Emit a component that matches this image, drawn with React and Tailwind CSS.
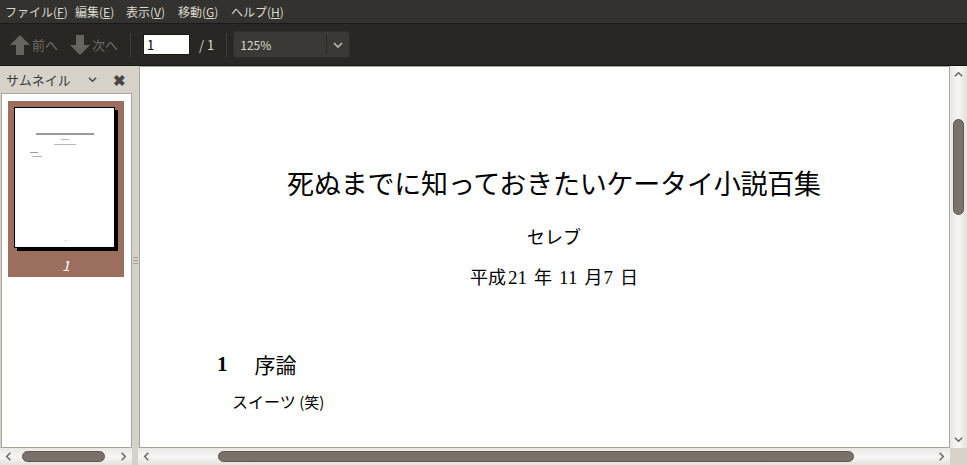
import React from "react";

const ui = { fontFamily: '"Noto Sans CJK JP", "Noto Sans", sans-serif' };
const doc = { fontFamily: '"Noto Sans CJK JP", "DejaVu Sans", sans-serif' };
const serif = { fontFamily: '"Liberation Serif", "Noto Sans CJK JP", serif' };

function Chevron({ dir = "down", className = "" }) {
  const paths = {
    down: "M2 4 L6 8 L10 4",
    up: "M2 8 L6 4 L10 8",
    left: "M8 2 L4 6 L8 10",
    right: "M4 2 L8 6 L4 10",
  };
  return (
    <svg viewBox="0 0 12 12" className={className} fill="none" stroke="currentColor" strokeWidth="1.6">
      <path d={paths[dir]} />
    </svg>
  );
}

function BlockArrow({ up }) {
  return (
    <svg viewBox="0 0 20 22" className="w-[20px] h-[22px]">
      <polygon
        points={up ? "10,1 20,11 14,11 14,21 6,21 6,11 0,11" : "10,21 20,11 14,11 14,1 6,1 6,11 0,11"}
        fill="#66645e"
      />
    </svg>
  );
}

function HScroll({ thumbLeft, thumbWidth, width }) {
  return (
    <div
      className="relative h-[17px] bg-gradient-to-b from-[#e9e7e3] via-[#f7f6f4] to-[#e4e1dc] text-[#6a6660]"
      style={{ width }}
    >
      <Chevron dir="left" className="absolute left-[3px] top-[3px] w-[11px] h-[11px]" />
      <div
        className="absolute top-[3px] h-[11px] rounded-full bg-[#7a716a] border border-[#5d5650]"
        style={{ left: thumbLeft, width: thumbWidth }}
      />
      <Chevron dir="right" className="absolute right-[3px] top-[3px] w-[11px] h-[11px]" />
    </div>
  );
}

export default function App() {
  return (
    <div className="w-[967px] h-[465px] flex flex-col overflow-hidden bg-[#d6d2ca]" style={ui}>
      {/* menubar */}
      <div className="h-[24px] bg-[#33322e] flex items-center pl-[5px] text-[12px] text-[#dcd8cf] border-b border-[#1c1b19]">
        <span className="w-[70px]">ファイル(<u>F</u>)</span>
        <span className="w-[51px]">編集(<u>E</u>)</span>
        <span className="w-[52px]">表示(<u>V</u>)</span>
        <span className="w-[53px]">移動(<u>G</u>)</span>
        <span>ヘルプ(<u>H</u>)</span>
      </div>

      {/* toolbar */}
      <div className="h-[42px] bg-[#282723] flex items-center text-[13px] border-b border-[#151412]">
        <div className="flex items-center ml-[10px] text-[#6e6c66]">
          <BlockArrow up />
          <span className="ml-[2px]">前へ</span>
        </div>
        <div className="flex items-center ml-[12px] text-[#6e6c66]">
          <BlockArrow />
          <span className="ml-[2px]">次へ</span>
        </div>
        <div className="ml-[12px] w-[1px] h-[24px] bg-[#3d3c38]" />
        <div className="ml-[12px] w-[47px] h-[21px] bg-white border border-[#1a1916] text-[13px] text-[#000000] pl-[3px] leading-[19px]">
          1
        </div>
        <span className="ml-[9px] text-[#d8d4cb] text-[13px]">/ 1</span>
        <div className="ml-[12px] w-[1px] h-[24px] bg-[#3d3c38]" />
        <div className="ml-[6px] w-[117px] h-[27px] rounded-[3px] bg-[#3a3935] border border-[#2e2d29] flex items-center">
          <span className="flex-1 pl-[6px] text-[12px] text-[#dcd8cf]">125%</span>
          <div className="w-[1px] h-[19px] bg-[#2a2926]" />
          <Chevron dir="down" className="w-[12px] h-[12px] mx-[5px] text-[#bcb8b0]" />
        </div>
      </div>

      {/* body */}
      <div className="flex-1 flex min-h-0">
        {/* sidebar */}
        <div className="w-[132px] flex flex-col">
          <div className="h-[27px] flex items-center pl-[6px] text-[13px] text-[#3c3b37]">
            <span className="w-[81px]">サムネイル</span>
            <Chevron dir="down" className="w-[11px] h-[11px] text-[#4a4843]" />
            <span className="ml-[15px] text-[15px] font-bold text-[#4a4843] leading-none">✖</span>
          </div>
          <div className="flex-1 ml-[1px] bg-white border border-[#a8a49c] pt-[7px] pl-[6px]">
            <div className="w-[116px] h-[176px] bg-[#9c6e5e] flex flex-col items-center pt-[6px]">
              <div className="relative w-[104px] h-[144px]">
                <div className="absolute left-[3px] top-[3px] w-[101px] h-[141px] bg-black" />
                <div className="absolute left-0 top-0 w-[101px] h-[141px] bg-white border border-black">
                  <div className="mt-[25px] mx-auto w-[58px] h-[2px] bg-[#9a9a9a]" />
                  <div className="mt-[4px] mx-auto w-[8px] h-[1px] bg-[#b8b8b8]" />
                  <div className="mt-[4px] mx-auto w-[22px] h-[1px] bg-[#b8b8b8]" />
                  <div className="mt-[7px] ml-[15px] w-[8px] h-[1px] bg-[#999]" />
                  <div className="mt-[3px] ml-[17px] w-[10px] h-[1px] bg-[#b0b0b0]" />
                  <div className="mt-[83px] ml-[50px] w-[1px] h-[1px] bg-[#bbb]" />
                </div>
              </div>
              <span className="mt-[4px] text-[14px] italic text-white">1</span>
            </div>
          </div>
          <HScroll thumbLeft={22} thumbWidth={83} width={132} />
        </div>

        {/* pane divider */}
        <div className="w-[6px] flex flex-col items-center justify-center gap-[2px] pb-[10px]">
          <div className="w-[5px] h-[1px] bg-[#a39f97]" />
          <div className="w-[5px] h-[1px] bg-[#a39f97]" />
          <div className="w-[5px] h-[1px] bg-[#a39f97]" />
        </div>

        {/* main view */}
        <div className="flex-1 flex flex-col">
          <div className="flex-1 flex min-h-0">
            <div className="flex-1 ml-[1px] bg-white border border-[#a8a49c] text-black" style={doc}>
              <div className="pt-[101px] pl-[19px] flex flex-col items-center">
                <div className="text-[27px] leading-[30px] tracking-[-0.2px]">死ぬまでに知っておきたいケータイ小説百集</div>
                <div className="mt-[27px] text-[18px] leading-[22px]">セレブ</div>
                <div className="mt-[18px] text-[18px] leading-[22px]">
                  平成<span className="ml-[2px] text-[19px]" style={serif}>21</span>
                  <span className="ml-[7px]">年</span>
                  <span className="ml-[7px] text-[19px]" style={serif}>11</span>
                  <span className="ml-[7px]">月</span>
                  <span className="ml-[1px] text-[19px]" style={serif}>7</span>
                  <span className="ml-[7px]">日</span>
                </div>
              </div>
              <div className="mt-[62px] ml-[77px] flex items-center text-[21px] leading-[26px]">
                <span className="font-bold" style={serif}>1</span>
                <span className="ml-[27px]">序論</span>
              </div>
              <div className="mt-[14px] ml-[92px] text-[16px] leading-[20px]">
                スイーツ <span className="text-[15px]">(笑)</span>
              </div>
            </div>
            {/* vertical scrollbar */}
            <div className="relative w-[17px] bg-gradient-to-r from-[#e9e7e3] via-[#f7f6f4] to-[#e4e1dc] text-[#6a6660]">
              <Chevron dir="up" className="absolute left-[3px] top-[3px] w-[11px] h-[11px]" />
              <div className="absolute left-[3px] top-[53px] w-[11px] h-[96px] rounded-full bg-[#7a716a] border border-[#5d5650]" />
              <Chevron dir="down" className="absolute left-[3px] bottom-[3px] w-[11px] h-[11px]" />
            </div>
          </div>
          <div className="flex">
            <HScroll thumbLeft={80} thumbWidth={636} width={812} />
            <div className="w-[17px] h-[17px] bg-[#d6d2ca]" />
          </div>
        </div>
      </div>
    </div>
  );
}
